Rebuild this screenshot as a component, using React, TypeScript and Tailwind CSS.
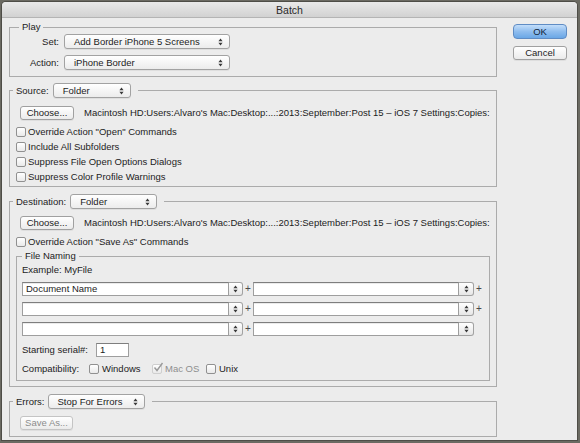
import React from "react";

function Arrows({ color = "#3a3a3a" }: { color?: string }) {
  return (
    <svg width="5" height="8" viewBox="0 0 5 8" className="shrink-0">
      <path d="M2.5 0.5 L4.6 3.2 H0.4 Z M0.4 4.8 H4.6 L2.5 7.5 Z" fill={color} />
    </svg>
  );
}

function Popup({ label, className }: { label: string; className: string }) {
  return (
    <div
      className={`flex h-[15px] items-center justify-between rounded-[3px] border border-[#a2a2a2] bg-gradient-to-b from-[#ffffff] to-[#ececec] pl-[9px] pr-[6px] text-[9.5px] leading-none text-[#1c1c1c] shadow-[0_1px_0_rgba(0,0,0,0.06)] ${className}`}
    >
      <span className="whitespace-nowrap">{label}</span>
      <Arrows />
    </div>
  );
}

function Button({ label, className, disabled }: { label: string; className: string; disabled?: boolean }) {
  return (
    <div
      className={`flex h-[14px] items-center justify-center rounded-[3px] border ${
        disabled ? "border-[#c4c4c4] text-[#8c8c8c]" : "border-[#a0a0a0] text-[#1c1c1c]"
      } bg-gradient-to-b from-[#ffffff] to-[#ebebeb] text-[9.5px] leading-none shadow-[0_1px_0_rgba(0,0,0,0.06)] ${className}`}
    >
      {label}
    </div>
  );
}

function Check({ checked, disabled }: { checked?: boolean; disabled?: boolean }) {
  return (
    <div
      className={`relative h-[10px] w-[10px] shrink-0 rounded-[2px] border ${
        disabled ? "border-[#cfcfcf]" : "border-[#909090]"
      } bg-gradient-to-b from-[#ffffff] to-[#e9e9e9]`}
    >
      {checked && (
        <svg width="11" height="11" viewBox="0 0 11 11" className="absolute left-[0px] top-[-3px]">
          <path d="M1.5 5.5 L4 8.5 L9.5 1" stroke="#9a9a9a" strokeWidth="1.4" fill="none" />
        </svg>
      )}
    </div>
  );
}

function CheckRow({ label }: { label: string }) {
  return (
    <div className="flex h-[15px] items-center gap-[2px] whitespace-nowrap text-[9.5px] leading-none text-[#1c1c1c]">
      <Check />
      <span>{label}</span>
    </div>
  );
}

function Combo({ value, textW, stepW }: { value?: string; textW: string; stepW: string }) {
  return (
    <div className="flex h-[14px]">
      <div
        className={`flex h-full items-center border border-[#9e9e9e] border-t-[#7e7e7e] bg-white pl-[3px] text-[9.5px] leading-none text-[#1c1c1c] shadow-[inset_0_1px_0_rgba(0,0,0,0.08)] ${textW}`}
      >
        {value}
      </div>
      <div
        className={`flex h-full items-center justify-center rounded-r-[3px] border border-l-0 border-[#a2a2a2] bg-gradient-to-b from-[#ffffff] to-[#e6e6e6] ${stepW}`}
      >
        <Arrows />
      </div>
    </div>
  );
}

function Plus({ show = true }: { show?: boolean }) {
  return (
    <div className="flex h-[14px] w-[10px] items-center justify-center text-[10px] leading-none text-[#4a4a4a]">
      {show ? "+" : ""}
    </div>
  );
}

export default function App() {
  const path =
    "Macintosh HD:Users:Alvaro's Mac:Desktop:...:2013:September:Post 15 \u2013 iOS 7 Settings:Copies:";
  return (
    <div className="h-[443px] w-[580px] overflow-hidden bg-[#6b6a62] pl-[2px] pt-[2px] font-['Liberation_Sans',Arial,sans-serif]">
      <div className="flex h-[438px] w-[575px] flex-col overflow-hidden rounded-t-[4px] bg-[#ececec] shadow-[0_0_0_1px_#4e4d47]">
        <div className="flex h-[16px] shrink-0 items-center justify-center border-b border-[#b4b4b4] bg-gradient-to-b from-[#e9e9e9] to-[#d2d2d2] pt-[1px] text-[10.5px] leading-none text-[#2a2a2a]">
          Batch
        </div>
        <div className="flex pl-[7px] pt-[3px]">
          {/* Left column */}
          <div className="flex w-[488px] flex-col">
            {/* Play */}
            <fieldset className="border border-[#ababab] pb-[6px]">
              <legend className="ml-[9px] px-[3px] text-[9.5px] leading-[12px] text-[#1c1c1c]">Play</legend>
              <div className="flex flex-col gap-[6px] pt-[1px]">
                <div className="flex items-center">
                  <span className="w-[50px] pr-[1px] text-right text-[9.5px] leading-none text-[#1c1c1c]">Set:</span>
                  <Popup label="Add Border iPhone 5 Screens" className="ml-[4px] w-[166px]" />
                </div>
                <div className="flex items-center">
                  <span className="w-[50px] pr-[1px] text-right text-[9.5px] leading-none text-[#1c1c1c]">Action:</span>
                  <Popup label="iPhone Border" className="ml-[4px] w-[166px]" />
                </div>
              </div>
            </fieldset>

            {/* Source */}
            <fieldset className="mt-[6px] border border-[#ababab] pb-[2px]">
              <legend className="ml-[3px] pl-[3px] pr-[7px]">
                <div className="flex items-center">
                  <span className="text-[9.5px] leading-none text-[#1c1c1c]">Source:</span>
                  <Popup label="Folder" className="ml-[4px] w-[78px]" />
                </div>
              </legend>
              <div className="flex items-center pt-[8px]">
                <Button label="Choose..." className="ml-[10px] w-[54px]" />
                <span className="ml-[10px] whitespace-nowrap text-[9.5px] leading-none text-[#1c1c1c]">{path}</span>
              </div>
              <div className="ml-[6px] mt-[4px] flex flex-col">
                <CheckRow label={'Override Action "Open" Commands'} />
                <CheckRow label="Include All Subfolders" />
                <CheckRow label="Suppress File Open Options Dialogs" />
                <CheckRow label="Suppress Color Profile Warnings" />
              </div>
            </fieldset>

            {/* Destination */}
            <fieldset className="mt-[7px] border border-[#ababab] pb-[5px]">
              <legend className="ml-[3px] pl-[3px] pr-[7px]">
                <div className="flex items-center">
                  <span className="text-[9.5px] leading-none text-[#1c1c1c]">Destination:</span>
                  <Popup label="Folder" className="ml-[4px] w-[87px]" />
                </div>
              </legend>
              <div className="flex items-center pt-[7px]">
                <Button label="Choose..." className="ml-[10px] w-[54px]" />
                <span className="ml-[10px] whitespace-nowrap text-[9.5px] leading-none text-[#1c1c1c]">{path}</span>
              </div>
              <div className="ml-[6px] mt-[4px]">
                <CheckRow label={'Override Action "Save As" Commands'} />
              </div>

              {/* File Naming */}
              <fieldset className="mx-[6px] mt-[1px] border border-[#ababab] pb-[4px]">
                <legend className="ml-[5px] px-[3px] text-[9.5px] leading-[12px] text-[#1c1c1c]">File Naming</legend>
                <div className="flex flex-col pl-[5px]">
                  <div className="mt-[2px] h-[12px] text-[9.5px] leading-[12px] text-[#1c1c1c]">Example: MyFile</div>
                  <div className="mt-[6px] flex flex-col gap-[6px]">
                    <div className="flex">
                      <Combo value="Document Name" textW="w-[207px]" stepW="w-[14px]" />
                      <Plus />
                      <Combo textW="w-[206px]" stepW="w-[15px]" />
                      <Plus />
                    </div>
                    <div className="flex">
                      <Combo textW="w-[207px]" stepW="w-[14px]" />
                      <Plus />
                      <Combo textW="w-[206px]" stepW="w-[15px]" />
                      <Plus />
                    </div>
                    <div className="flex">
                      <Combo textW="w-[207px]" stepW="w-[14px]" />
                      <Plus />
                      <Combo textW="w-[206px]" stepW="w-[15px]" />
                      <Plus show={false} />
                    </div>
                  </div>
                  <div className="mt-[7px] flex items-center">
                    <span className="w-[74px] whitespace-nowrap text-[9.5px] leading-none text-[#1c1c1c]">Starting serial#:</span>
                    <div className="flex h-[14px] w-[33px] items-center border border-[#9e9e9e] border-t-[#7e7e7e] bg-white pl-[3px] text-[9.5px] leading-none text-[#1c1c1c]">
                      1
                    </div>
                  </div>
                  <div className="mt-[5px] flex h-[14px] items-center whitespace-nowrap text-[9.5px] leading-none">
                    <span className="w-[67px] text-[#1c1c1c]">Compatibility:</span>
                    <Check />
                    <span className="ml-[3px] w-[50px] text-[#1c1c1c]">Windows</span>
                    <Check checked disabled />
                    <span className="ml-[3px] w-[41px] text-[#8e8e8e]">Mac OS</span>
                    <Check />
                    <span className="ml-[3px] text-[#1c1c1c]">Unix</span>
                  </div>
                </div>
              </fieldset>
            </fieldset>

            {/* Errors */}
            <fieldset className="mt-[7px] border border-[#ababab] pb-[6px]">
              <legend className="ml-[3px] pl-[3px] pr-[7px]">
                <div className="flex items-center">
                  <span className="text-[9.5px] leading-none text-[#1c1c1c]">Errors:</span>
                  <Popup label="Stop For Errors" className="ml-[3px] w-[97px]" />
                </div>
              </legend>
              <div className="flex pt-[7px]">
                <Button label="Save As..." disabled className="ml-[10px] w-[53px]" />
              </div>
            </fieldset>
          </div>

          {/* Right column */}
          <div className="ml-[16px] mt-[3px] flex w-[54px] flex-col gap-[7px]">
            <div className="flex h-[15px] items-center justify-center rounded-[4px] border border-[#5f8cc4] bg-gradient-to-b from-[#c3defa] via-[#8fbdee] to-[#6aa7e6] text-[9.5px] leading-none text-[#10243a]">
              OK
            </div>
            <Button label="Cancel" className="w-[54px]" />
          </div>
        </div>
      </div>
    </div>
  );
}
